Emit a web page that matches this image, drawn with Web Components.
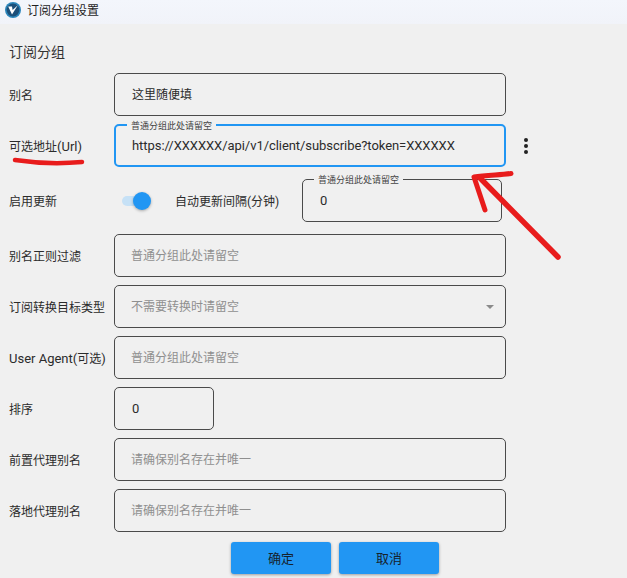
<!DOCTYPE html>
<html lang="zh">
<head>
<meta charset="utf-8">
<title>订阅分组设置</title>
<style>
  html, body { margin: 0; height: 100%; }
  body {
    position: relative;
    overflow: hidden;
    background: #f0f0f0;
    color: #2b2b2b;
    font: 12px Roboto, "Noto Sans CJK SC", sans-serif;
  }
  .annotation { position: absolute; left: 0; top: 0; pointer-events: none; }
</style>
</head>
<body>
<title-bar>订阅分组设置</title-bar>
<settings-form>
  <form-row label="别名"><text-field value="这里随便填" cjk></text-field></form-row>
  <form-row label="可选地址(Url)" actions>
    <text-field focused float="普通分组此处请留空" value="https://XXXXXX/api/v1/client/subscribe?token=XXXXXX"></text-field>
  </form-row>
  <update-row></update-row>
  <form-row label="别名正则过滤"><text-field placeholder="普通分组此处请留空"></text-field></form-row>
  <form-row label="订阅转换目标类型"><text-field select placeholder="不需要转换时请留空"></text-field></form-row>
  <form-row label="User Agent(可选)"><text-field placeholder="普通分组此处请留空"></text-field></form-row>
  <form-row label="排序"><text-field narrow value="0"></text-field></form-row>
  <form-row label="前置代理别名"><text-field placeholder="请确保别名存在并唯一"></text-field></form-row>
  <form-row label="落地代理别名"><text-field placeholder="请确保别名存在并唯一"></text-field></form-row>
</settings-form>
<svg class="annotation" width="627" height="578" fill="none" stroke="#e81c1c" stroke-linecap="round" stroke-linejoin="round">
  <path d="M15 160C35 163 60 164 82 162" stroke-width="4.5"/>
  <path d="M558 257L480 178" stroke-width="5.5"/>
  <path d="M485 210L474 177C486 175 500 175 511 173.500" stroke-width="5"/>
</svg>

<script>
(function () {

  class TitleBar extends HTMLElement {
    constructor() {
      super();
      this.attachShadow({ mode: 'open' }).innerHTML = `
        <style>
          :host {
            display: flex;
            align-items: center;
            gap: 6px;
            height: 24px;
            padding: 0 0 5px 5px;
            box-sizing: border-box;
            background: linear-gradient(#f3f6fc, #f1f3f9);
            color: #1f1f1f;
            font: 12px "Noto Sans CJK SC", sans-serif;
          }
          svg { display: block; }
        </style>
        <svg width="16" height="16" viewBox="0 0 16 16">
          <circle cx="8" cy="8" r="8" fill="#2b86bb"/>
          <circle cx="8" cy="8" r="6.4" fill="#1b4f79"/>
          <path d="M3.2 4.400L7 4.400 7.600 8 12.800 3.200 7 12.600z" fill="#fff"/>
        </svg>
        <slot></slot>`;
    }
  }

  class SettingsForm extends HTMLElement {
    constructor() {
      super();
      this.attachShadow({ mode: 'open' }).innerHTML = `
        <style>
          :host { display: block; padding: 18px 0 0 9px; }
          h2 { margin: 0 0 13px; font: 400 14px/18px "Noto Sans CJK SC", sans-serif; color: #333; }
          .rows { display: flex; flex-direction: column; gap: 8px; }
          .buttons { display: flex; gap: 8px; margin-top: 10px; padding-left: 222px; }
        </style>
        <h2>订阅分组</h2>
        <div class="rows"><slot></slot></div>
        <div class="buttons">
          <action-button>确定</action-button>
          <action-button>取消</action-button>
        </div>`;
    }
  }

  class FormRow extends HTMLElement {
    constructor() {
      super();
      this.attachShadow({ mode: 'open' }).innerHTML = `
        <style>
          :host { display: grid; grid-template-columns: 105px 392px 40px; align-items: center; }
          .label { white-space: nowrap; color: #2b2b2b; }
          .label b { font-weight: 400; font-size: 13px; }
          .more { display: none; justify-self: center; }
          :host([actions]) .more { display: flex; flex-direction: column; gap: 2px; }
          .more i { width: 4px; height: 4px; border-radius: 50%; background: #222; }
        </style>
        <span class="label"></span>
        <slot></slot>
        <div class="more"><i></i><i></i><i></i></div>`;
    }

    connectedCallback() {
      // latin runs sit a little larger than the CJK ones in the reference
      const label = this.shadowRoot.querySelector('.label');
      this.getAttribute('label').split(/([\x20-\x7e]+)/).forEach((part, i) => {
        if (!part) return;
        const node = i % 2 ? document.createElement('b') : document.createElement('span');
        node.textContent = part;
        label.appendChild(node);
      });
    }
  }

  class TextField extends HTMLElement {
    constructor() {
      super();
      this.attachShadow({ mode: 'open' }).innerHTML = `
        <style>
          :host {
            display: flex;
            align-items: center;
            position: relative;
            box-sizing: border-box;
            height: 43px;
            padding: 0 16px;
            border: 1px solid #4a4a4a;
            border-radius: 5px;
            font: 13px Roboto, "Noto Sans CJK SC", sans-serif;
            color: #2b2b2b;
          }
          :host([focused]) { border: 2px solid #2196f3; padding: 0 15px; }
          :host([narrow]) { width: 100px; }
          .value { white-space: nowrap; line-height: 1; letter-spacing: -.06px; }
          :host([value]) .value { padding-left: 1px; }
          :host([cjk]) .value { font-size: 12px; letter-spacing: 0; }
          .value.empty { color: #8f8f8f; font-size: 12px; letter-spacing: 0; }
          .float {
            position: absolute;
            left: 11px;
            top: -6px;
            padding: 0 4px;
            background: #f0f0f0;
            color: #444;
            font-size: 9px;
            line-height: 12px;
            white-space: nowrap;
          }
          .arrow {
            position: absolute;
            right: 11px;
            top: 19px;
            width: 0;
            height: 0;
            border: 4.5px solid transparent;
            border-top-color: #8a8a8a;
            border-bottom: 0;
          }
        </style>
        <span class="float" hidden></span>
        <span class="value"></span>
        <span class="arrow" hidden></span>`;
    }

    connectedCallback() {
      const root = this.shadowRoot;
      const value = root.querySelector('.value');
      const float = root.querySelector('.float');
      if (this.hasAttribute('value')) {
        value.textContent = this.getAttribute('value');
      } else {
        value.textContent = this.getAttribute('placeholder');
        value.classList.add('empty');
      }
      if (this.hasAttribute('float')) {
        float.textContent = this.getAttribute('float');
        float.hidden = false;
      }
      root.querySelector('.arrow').hidden = !this.hasAttribute('select');
    }
  }

  class ToggleSwitch extends HTMLElement {
    constructor() {
      super();
      this.attachShadow({ mode: 'open' }).innerHTML = `
        <style>
          :host { display: block; position: relative; width: 30px; height: 18px; }
          .track { position: absolute; left: 1px; top: 4px; width: 24px; height: 10px; border-radius: 5px; background: #c6e1f6; }
          .thumb {
            position: absolute;
            left: 12px;
            top: 0;
            width: 18px;
            height: 18px;
            border-radius: 50%;
            background: #2196f3;
            box-shadow: 0 1px 3px rgba(0, 0, 0, .3);
          }
        </style>
        <div class="track"></div>
        <div class="thumb"></div>`;
    }
  }

  class UpdateRow extends HTMLElement {
    constructor() {
      super();
      this.attachShadow({ mode: 'open' }).innerHTML = `
        <style>
          :host { display: flex; align-items: center; height: 51px; }
          .label { width: 112px; padding-bottom: 1px; white-space: nowrap; }
          .interval { width: 127px; margin-left: 24px; white-space: nowrap; }
          text-field { width: 200px; flex: none; }
        </style>
        <span class="label">启用更新</span>
        <toggle-switch></toggle-switch>
        <span class="interval">自动更新间隔(分钟)</span>
        <text-field float="普通分组此处请留空" value="0"></text-field>`;
    }
  }

  class ActionButton extends HTMLElement {
    constructor() {
      super();
      this.attachShadow({ mode: 'open' }).innerHTML = `
        <style>
          :host {
            display: flex;
            align-items: center;
            justify-content: center;
            box-sizing: border-box;
            width: 100px;
            height: 32px;
            padding-bottom: 2px;
            border-radius: 3px;
            background: #2196f3;
            color: #16222c;
            font: 13px "Noto Sans CJK SC", sans-serif;
            box-shadow: 0 1px 3px rgba(0, 0, 0, .35);
          }
        </style>
        <slot></slot>`;
    }
  }

  customElements.define('title-bar', TitleBar);
  customElements.define('settings-form', SettingsForm);
  customElements.define('form-row', FormRow);
  customElements.define('text-field', TextField);
  customElements.define('toggle-switch', ToggleSwitch);
  customElements.define('update-row', UpdateRow);
  customElements.define('action-button', ActionButton);

})();
</script>
</body>
</html>
